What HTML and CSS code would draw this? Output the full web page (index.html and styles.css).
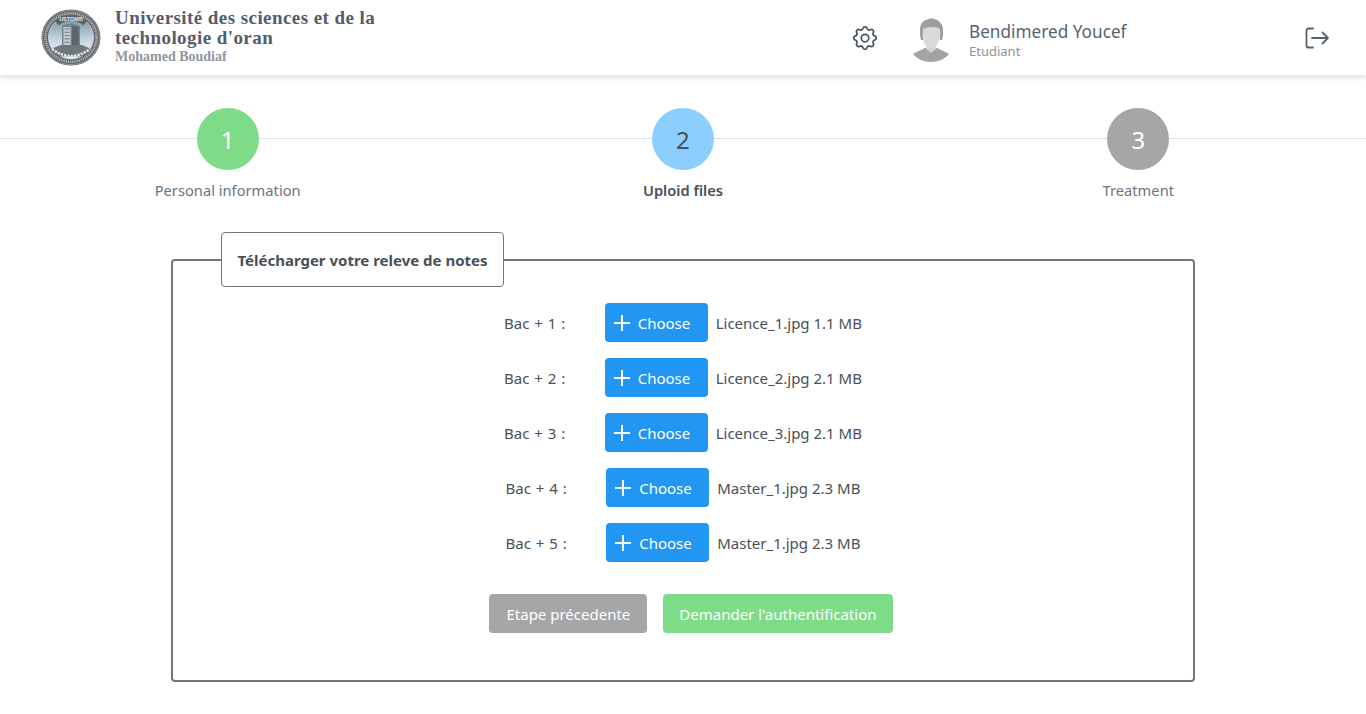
FILE: index.html
```html
<!DOCTYPE html>
<html lang="fr">
<head>
    <meta charset="UTF-8">
    <meta name="viewport" content="width=device-width, initial-scale=1.0">
    <title>Etapes</title>
    <link rel="stylesheet" href="styles.css">
</head>
<body>
    <header class="topbar">
        <div class="brand">
            <svg class="logo" viewBox="0 0 60 60" preserveAspectRatio="none">
                <defs>
                    <linearGradient id="sky" x1="0" y1="0" x2="0" y2="1">
                        <stop offset="0%" stop-color="#6f8ca0"/>
                        <stop offset="55%" stop-color="#c5d5df"/>
                        <stop offset="100%" stop-color="#eef2f4"/>
                    </linearGradient>
                </defs>
                <circle cx="30" cy="30" r="29.500" fill="#62676b"/>
                <circle cx="30" cy="30" r="28.500" fill="none" stroke="#9da2a5" stroke-width="0.800"/>
                <circle cx="30" cy="30" r="25.500" fill="none" stroke="#b4b9bc" stroke-width="2.600" stroke-dasharray="1.200 1"/>
                <circle cx="30" cy="30" r="22.500" fill="url(#sky)" stroke="#d9dde0" stroke-width="0.800"/>
                <path d="M14 13a22 22 0 0 1 32 0l-4 4a17 17 0 0 0-24 0z" fill="#56646e"/>
                <text class="logo-text" x="30" y="13" text-anchor="middle">USTOMB</text>
                <path d="M21 17l10-2 8 3v24H21z" fill="#75838c"/>
                <path d="M22.500 19h7v23h-7z" fill="#c4cbd0"/>
                <path d="M31 18h6.500v24H31z" fill="#59666e"/>
                <path d="M23.500 21h5M23.500 24.500h5M23.500 28h5M23.500 31.500h5M23.500 35h5M23.500 38.500h5" stroke="#6c787f" stroke-width="1"/>
                <path d="M12 41l8-3h21l7 3 2 3-7 6H17l-7-6z" fill="#6d777c"/>
                <path d="M11 42q19 15 38 0" fill="none" stroke="#e4e7e9" stroke-width="2.600" stroke-dasharray="2.400 1"/>
            </svg>
            <div class="brand-text">
                <h1>Université des sciences et de la<br>technologie d'oran</h1>
                <p>Mohamed Boudiaf</p>
            </div>
        </div>
        <div class="user-area">
            <svg class="icon-gear" viewBox="0 0 24 24">
                <path d="M10.325 4.317c.426-1.756 2.924-1.756 3.35 0a1.724 1.724 0 0 0 2.573 1.066c1.543-.94 3.31.826 2.37 2.37a1.724 1.724 0 0 0 1.065 2.572c1.756.426 1.756 2.924 0 3.35a1.724 1.724 0 0 0-1.066 2.573c.94 1.543-.826 3.31-2.37 2.37a1.724 1.724 0 0 0-2.572 1.065c-.426 1.756-2.924 1.756-3.35 0a1.724 1.724 0 0 0-2.573-1.066c-1.543.94-3.31-.826-2.37-2.37a1.724 1.724 0 0 0-1.065-2.572c-1.756-.426-1.756-2.924 0-3.35a1.724 1.724 0 0 0 1.066-2.573c-.94-1.543.826-3.31 2.37-2.37 1 .608 2.296.07 2.572-1.065z"/>
                <circle cx="12" cy="12" r="3"/>
            </svg>
            <svg class="avatar" viewBox="0 0 36 44">
                <path d="M0 36c3-2 8-4 12-6h12c4 2 9 4 12 6-4 5-11 8-18 8S4 41 0 36z" fill="#a3a3a3"/>
                <path d="M13 26h10v5l-5 4-5-4z" fill="#d4d4d4"/>
                <path d="M8 22c-1-3-1-6-1-10C7 5 11 2 15 1.500c2-1.500 4-1.500 6-.5 5 1 9 5 9 11 0 4 0 7-1 10h-2V11H10v11z" fill="#9e9e9e"/>
                <path d="M10 11c3-2 13-3 17 0 .5 6 0 10-2 14-1.500 3-4.500 5-7 5s-5.500-2-7-5c-1.500-4-1.500-8-1-14z" fill="#dadada"/>
            </svg>
            <div class="user-text">
                <div class="user-name">Bendimered Youcef</div>
                <div class="user-role">Etudiant</div>
            </div>
            <svg class="icon-logout" viewBox="0 0 26 24">
                <path d="M9 2.500H4.500a2 2 0 0 0-2 2v15a2 2 0 0 0 2 2H9"/>
                <path d="M8 12h16M18.500 6.500L24 12l-5.500 5.500"/>
            </svg>
        </div>
    </header>

    <section class="stepper">
        <div class="step">
            <div class="step-num step-done">1</div>
            <div class="step-label">Personal information</div>
        </div>
        <div class="step">
            <div class="step-num step-current">2</div>
            <div class="step-label step-label-current">Uploid files</div>
        </div>
        <div class="step">
            <div class="step-num step-todo">3</div>
            <div class="step-label">Treatment</div>
        </div>
    </section>

    <main class="upload-box">
        <div class="upload-title">Télécharger votre releve de notes</div>

        <div class="upload-row">
            <span class="row-label">Bac + 1 :</span>
            <button class="btn btn-choose"><svg class="plus" viewBox="0 0 16 16"><path d="M8 0v16M0 8h16"/></svg>Choose</button>
            <span class="row-file">Licence_1.jpg 1.1 MB</span>
        </div>
        <div class="upload-row">
            <span class="row-label">Bac + 2 :</span>
            <button class="btn btn-choose"><svg class="plus" viewBox="0 0 16 16"><path d="M8 0v16M0 8h16"/></svg>Choose</button>
            <span class="row-file">Licence_2.jpg 2.1 MB</span>
        </div>
        <div class="upload-row">
            <span class="row-label">Bac + 3 :</span>
            <button class="btn btn-choose"><svg class="plus" viewBox="0 0 16 16"><path d="M8 0v16M0 8h16"/></svg>Choose</button>
            <span class="row-file">Licence_3.jpg 2.1 MB</span>
        </div>
        <div class="upload-row">
            <span class="row-label">Bac + 4 :</span>
            <button class="btn btn-choose"><svg class="plus" viewBox="0 0 16 16"><path d="M8 0v16M0 8h16"/></svg>Choose</button>
            <span class="row-file">Master_1.jpg 2.3 MB</span>
        </div>
        <div class="upload-row">
            <span class="row-label">Bac + 5 :</span>
            <button class="btn btn-choose"><svg class="plus" viewBox="0 0 16 16"><path d="M8 0v16M0 8h16"/></svg>Choose</button>
            <span class="row-file">Master_1.jpg 2.3 MB</span>
        </div>

        <div class="actions">
            <button class="btn btn-prev">Etape précedente</button>
            <button class="btn btn-next">Demander l'authentification</button>
        </div>
    </main>
</body>
</html>
```

FILE: styles.css
```css
/* Basic styling */
body {
    font-family: 'Noto Sans', sans-serif;
    background-color: #fff;
    color: #495057;
    margin: 0;
    padding: 0;
}

/* Top bar */
.topbar {
    height: 75px;
    box-sizing: border-box;
    padding: 0 36px 0 41px;
    display: flex;
    align-items: center;
    justify-content: space-between;
    background-color: #fff;
    box-shadow: 0 2px 6px rgba(0,0,0,0.15);
}

.brand {
    display: flex;
    align-items: center;
    gap: 14px;
}

.logo {
    width: 60px;
    height: 57px;
}

.logo-text {
    font-family: 'Liberation Sans', sans-serif;
    font-size: 5.5px;
    font-weight: 700;
    fill: #e6e9eb;
}

.brand-text {
    font-family: 'Liberation Serif', serif;
    font-weight: 700;
    margin-bottom: 2px;
}

.brand-text h1 {
    margin: 0;
    font-size: 19px;
    line-height: 20px;
    letter-spacing: 0.43px;
    color: #535d6b;
}

.brand-text p {
    margin: 0;
    font-size: 14px;
    line-height: 17px;
    color: #8f959c;
}

.user-area {
    display: flex;
    align-items: center;
}

.icon-gear {
    width: 30px;
    height: 30px;
    fill: none;
    stroke: #4a5562;
    stroke-width: 1.4;
    margin-right: 33px;
}

.avatar {
    width: 36px;
    height: 44px;
    margin-right: 20px;
    margin-top: 5px;
}

.user-text {
    width: 335px;
    padding-top: 3px;
}

.user-name {
    font-size: 17.2px;
    line-height: 24px;
    color: #596270;
}

.user-role {
    font-size: 13px;
    line-height: 15px;
    color: #8d949c;
}

.icon-logout {
    width: 26px;
    height: 24px;
    fill: none;
    stroke: #57616c;
    stroke-width: 1.8;
    stroke-linecap: round;
    stroke-linejoin: round;
}

/* Stepper */
.stepper {
    display: flex;
    margin-top: 33px;
    background: linear-gradient(#dee2e6, #dee2e6) 0 30px / 100% 1px no-repeat;
}

.step {
    flex: 1;
    display: flex;
    flex-direction: column;
    align-items: center;
}

.step-num {
    width: 62px;
    height: 62px;
    border-radius: 50%;
    display: flex;
    align-items: center;
    justify-content: center;
    font-size: 24px;
}

.step-done {
    background-color: #7edc88;
    color: #fff;
}

.step-current {
    background-color: #8ccfff;
    color: #495057;
}

.step-todo {
    background-color: #a6a6a6;
    color: #fff;
}

.step-label {
    margin-top: 10px;
    font-size: 14.7px;
    line-height: 21px;
    color: #6c757d;
}

.step-label-current {
    font-weight: 600;
    color: #495057;
}

/* Upload box */
.upload-box {
    position: relative;
    box-sizing: border-box;
    width: 1024px;
    height: 423px;
    margin: 58px auto 32px;
    padding-top: 42px;
    border: 2px solid #6c7a7d;
    border-radius: 4px;
}

.upload-title {
    position: absolute;
    top: -29px;
    left: 48px;
    width: 283px;
    height: 55px;
    box-sizing: border-box;
    display: flex;
    align-items: center;
    justify-content: center;
    background-color: #fff;
    border: 1px solid #6c7a7d;
    border-radius: 4px;
    font-size: 15px;
    font-weight: 700;
    color: #495057;
}

.upload-row {
    display: flex;
    align-items: center;
    justify-content: center;
    margin-bottom: 16px;
    font-size: 15px;
}

.row-label {
    margin-right: 39.4px;
    word-spacing: 1px;
}

.row-file {
    margin-left: 8px;
}

.btn {
    height: 39px;
    border: none;
    border-radius: 4px;
    color: #fff;
    font-family: inherit;
    font-size: 15px;
    padding: 0 17px;
}

.btn-choose {
    width: 103px;
    padding: 0 9px;
    display: flex;
    align-items: center;
    background-color: #2196f3;
}

.plus {
    width: 16px;
    height: 16px;
    margin-right: 8px;
    fill: none;
    stroke: #fff;
    stroke-width: 2;
}

.actions {
    display: flex;
    justify-content: center;
    margin-top: 32px;
}

.actions .btn {
    margin-left: 16px;
}

.actions .btn-next {
    padding: 0 16px;
}

.btn-prev {
    background-color: #a6a6a6;
}

.btn-next {
    background-color: #7edc88;
}
```
